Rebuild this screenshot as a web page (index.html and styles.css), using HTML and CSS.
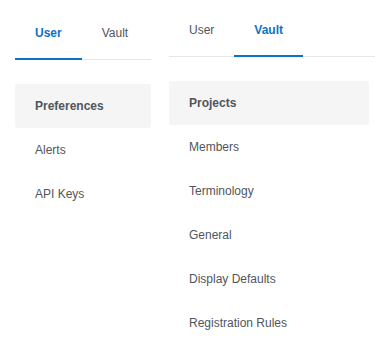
FILE: index.html
```html
<!DOCTYPE html>
<html lang="en">
<head>
    <meta charset="UTF-8">
    <meta name="viewport" content="width=device-width, initial-scale=1.0">
    <title>Settings</title>
    <link rel="stylesheet" href="styles.css">
</head>
<body>
    <div class="settings">
        <!-- User tab selected -->
        <div class="panel panel-user">
            <div class="tabs">
                <div class="tab active">User</div>
                <div class="tab">Vault</div>
            </div>
            <ul class="menu">
                <li class="menu-item selected">Preferences</li>
                <li class="menu-item">Alerts</li>
                <li class="menu-item">API Keys</li>
            </ul>
        </div>

        <!-- Vault tab selected -->
        <div class="panel panel-vault">
            <div class="tabs">
                <div class="tab">User</div>
                <div class="tab active">Vault</div>
            </div>
            <ul class="menu">
                <li class="menu-item selected">Projects</li>
                <li class="menu-item">Members</li>
                <li class="menu-item">Terminology</li>
                <li class="menu-item">General</li>
                <li class="menu-item">Display Defaults</li>
                <li class="menu-item">Registration Rules</li>
            </ul>
        </div>
    </div>
</body>
</html>
```

FILE: styles.css
```css
body {
    font-family: "Liberation Sans", Arial, sans-serif;
    font-size: 12px;
    margin: 0;
    padding: 0;
    background: #fff;
    color: #50565c;
    overflow: hidden;
}

.settings {
    display: flex;
    align-items: flex-start;
    gap: 18px;
    padding-left: 15px;
}

.panel-user {
    width: 136px;
    margin-top: 5px;
}

.panel-vault {
    flex: 1;
    margin-top: 2px;
}

.tabs {
    display: flex;
    border-bottom: 1px solid #e6e6e6;
}

.tab {
    padding: 18px 20px 15px;
    line-height: 20px;
    border-bottom: 2px solid transparent;
    margin-bottom: -1px;
    color: #50565c;
}

.tab.active {
    color: #0b72c6;
    font-weight: bold;
    border-bottom-color: #0b72c6;
}

.menu {
    list-style: none;
    margin: 24px 0 0;
    padding: 0;
}

.panel-vault .menu {
    margin-right: 6px;
}

.menu-item {
    height: 44px;
    line-height: 44px;
    padding: 0 20px;
    border-radius: 3px;
    white-space: nowrap;
}

.menu-item.selected {
    background: #f5f5f5;
    font-weight: bold;
}
```
